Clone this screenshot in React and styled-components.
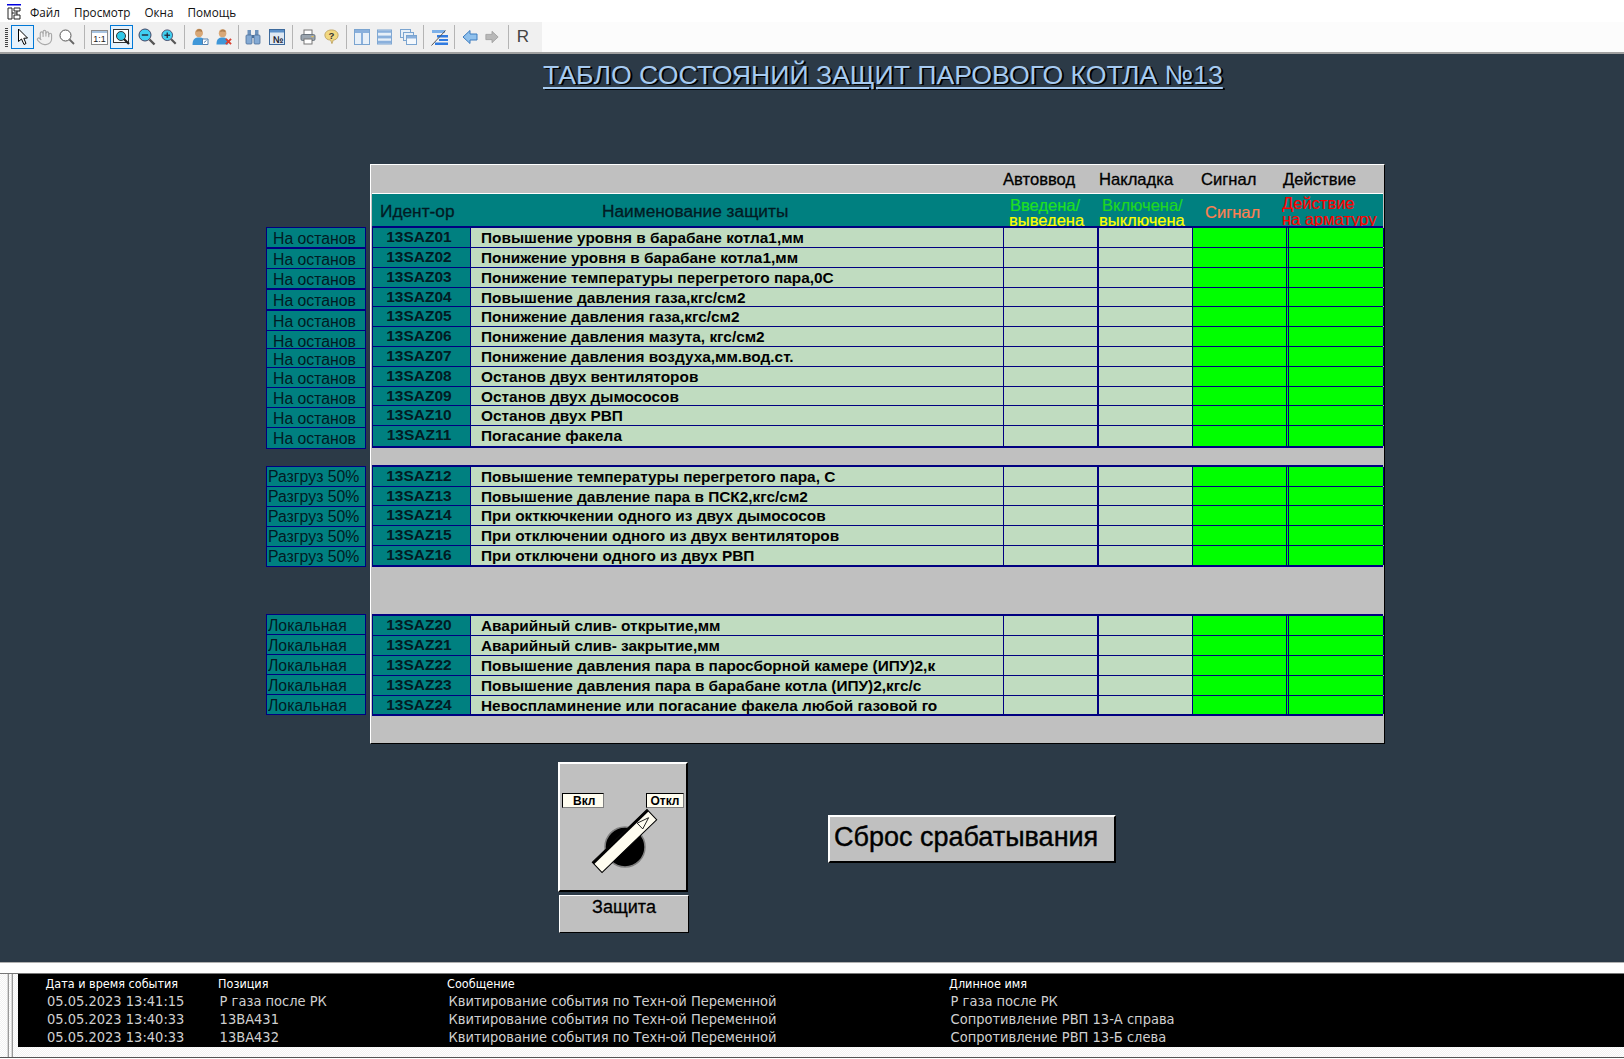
import React from 'react';
import styled, { createGlobalStyle } from 'styled-components';
import { Hand } from 'lucide-react';

const GlobalStyle = createGlobalStyle`
	html, body {
		margin: 0;
		padding: 0;
		background: #fff;
	}
	* {
		box-sizing: border-box;
	}
`;

const NAVY = '#000080';
const TEAL = '#008080';
const DARK = '#2c3a47';

const Window = styled.div`
	width: 1624px;
	height: 1059px;
	display: flex;
	flex-direction: column;
	overflow: hidden;
	font-family: "Liberation Sans", Arial, sans-serif;
`;

const MenuBar = styled.div`
	height: 22px;
	flex: none;
	display: flex;
	align-items: center;
	padding: 1px 0 0 7px;
	background: #fff;
	font-family: "Open Sans", "Noto Sans", sans-serif;
	font-size: 11.7px;
	color: #111;
`;

const MenuItem = styled.span`
	margin-left: ${props => props.gap}px;
`;

const ToolBar = styled.div`
	height: 32px;
	flex: none;
	background: #fcfcfc;
	border-bottom: 2px solid #a0a0a0;
`;

const ToolStrip = styled.div`
	width: 542px;
	height: 30px;
	background: #f0f0f0;
	display: flex;
	align-items: center;
	padding-left: 5px;
`;

const Grip = styled.div`
	width: 3px;
	height: 19px;
	margin-right: 3px;
	background: repeating-linear-gradient(#444 0 1px, transparent 1px 2px);
`;

const ToolSlot = styled.div`
	width: ${props => props.w || 22}px;
	height: 24px;
	flex: none;
	display: flex;
	align-items: center;
	justify-content: center;
	border: 1px solid ${props => props.active ? '#0078d7' : 'transparent'};
	background: ${props => props.hot ? '#e5f1fb' : 'transparent'};
	font-size: 17px;
	color: #444;
`;

const ToolSep = styled.div`
	width: 1px;
	height: 24px;
	flex: none;
	margin: 0 ${props => props.r ?? 0}px 0 ${props => props.l ?? 0}px;
	background: #b4b4b4;
`;

const Screen = styled.div`
	flex: 1;
	background: ${DARK};
	min-height: 0;
`;

const Title = styled.div`
	height: 110px;
	padding: 6px 0 0 543px;
	font-size: 26.6px;
	line-height: 30px;
	color: #a6caf0;
	text-decoration: underline;
	text-decoration-thickness: 2px;
	text-underline-offset: 3px;
	text-shadow: 2px 1px 0 #000;
	white-space: nowrap;
`;

const Board = styled.div`
	display: flex;
	gap: 4px;
	padding-left: 266px;
`;

const SideColumn = styled.div`
	width: 100px;
	padding-top: 63px;
	display: flex;
	flex-direction: column;
`;

const SideGroup = styled.div`
	display: flex;
	flex-direction: column;
	margin-top: ${props => props.gap}px;
`;

const SideLabel = styled.div`
	height: ${props => props.h}px;
	margin-top: ${props => props.joined ? -1 : 0}px;
	border: 1px solid ${NAVY};
	background: ${TEAL};
	padding-left: ${props => props.pad}px;
	font-size: 15.8px;
	color: #021b24;
	overflow: hidden;
`;

const SideText = styled.div`
	height: ${props => props.clip ? 17 : 19}px;
	line-height: ${props => props.clip ? 22 : 21}px;
	margin-top: ${props => props.up ? -1 : 0}px;
	overflow: hidden;
	white-space: nowrap;
`;

const Panel = styled.div`
	width: 1015px;
	height: 580px;
	padding: 0 1px 0 1px;
	background: #c0c0c0;
	border: 1px solid;
	border-color: #fff #000 #000 #fff;
`;

const TopHead = styled.div`
	height: 28px;
	display: grid;
	grid-template-columns: 631px 96px 102px 82px 1fr;
	align-items: center;
	font-size: 16.6px;
	color: #000;
	-webkit-text-stroke: 0.3px #000;
	padding-top: 2px;
	white-space: nowrap;
`;

const TableHead = styled.div`
	height: 33px;
	display: grid;
	grid-template-columns: 98px 534px 95px 93px 96px 96px;
	background: ${TEAL};
	border-top: 1px solid #fff;
	font-size: 17.3px;
	color: #021b24;
`;

const HeadText = styled.div`
	padding: 7px 0 0 ${props => props.pad}px;
	-webkit-text-stroke: 0.3px #021b24;
	white-space: nowrap;
`;

const TwoLine = styled.div`
	padding-top: ${props => props.top ?? 3}px;
	margin-left: ${props => props.pad}px;
	font-size: 16.5px;
	line-height: 15px;
	height: 32px;
	overflow: hidden;
	white-space: nowrap;
`;

const Line = styled.div`
	color: ${props => props.color};
	padding-left: ${props => props.pad || 0}px;
	margin-top: ${props => props.mt || 0}px;
	-webkit-text-stroke: 0.2px ${props => props.color};
`;

const Group = styled.div`
	border-top: 2px solid ${NAVY};
	margin-top: ${props => props.gap}px;
`;

const Row = styled.div`
	height: ${props => props.h}px;
	display: grid;
	grid-template-columns: 99px 533px 95px 93px 96px 96px;
	background: #c0dcc0;
	border-bottom: ${props => props.last ? 2 : 1}px solid ${NAVY};
`;

const IdCell = styled.div`
	background: ${TEAL};
	border-left: 1px solid ${NAVY};
	border-right: 1px solid ${NAVY};
	text-align: center;
	font-size: 15.5px;
	font-weight: bold;
	line-height: 17px;
	color: #021b24;
	padding-right: 5px;
	white-space: nowrap;
`;

const NameCell = styled.div`
	padding: 1px 0 0 10px;
	font-size: 15.4px;
	font-weight: bold;
	line-height: 17px;
	color: #000;
	white-space: nowrap;
	overflow: hidden;
	border-right: 1px solid ${NAVY};
`;

const StateCell = styled.div`
	border-right: ${props => props.thick ? 2 : 0}px solid ${NAVY};
`;

const SignalCell = styled.div`
	background: #00ff00;
	border-left: 1px solid ${NAVY};
`;

const ActionCell = styled.div`
	background: #00ff00;
	background-clip: padding-box;
	border-left: 3px double ${NAVY};
	border-right: 1px solid ${NAVY};
	margin-left: -2px;
`;

const Controls = styled.div`
	display: flex;
	padding: 18px 0 0 558px;
`;

const SwitchColumn = styled.div`
	width: 130px;
	display: flex;
	flex-direction: column;
	gap: 3px;
`;

const SwitchBox = styled.div`
	width: 130px;
	height: 130px;
	background: #c0c0c0;
	border: 2px solid;
	border-color: #fff #000 #000 #fff;
	padding-top: 29px;
`;

const SwitchTags = styled.div`
	display: flex;
	justify-content: space-between;
	padding: 0 2px;
`;

const Tag = styled.div`
	width: ${props => props.w}px;
	height: 15px;
	background: #fffdf0;
	border: 1px solid;
	border-color: #000 #808080 #808080 #000;
	font-size: 12px;
	font-weight: bold;
	line-height: 14px;
	text-align: ${props => props.pad ? 'left' : 'center'};
	padding-left: ${props => props.pad || 0}px;
	color: #000;
`;

const KnobWrap = styled.div`
	height: 72px;
	padding-left: 34px;
`;

const SwitchCaption = styled.div`
	width: 130px;
	height: 38px;
	margin-left: 1px;
	background: #c0c0c0;
	border: 1px solid;
	border-color: #fff #000 #000 #fff;
	text-align: center;
	font-size: 18px;
	line-height: 23px;
	color: #000;
	-webkit-text-stroke: 0.3px #000;
`;

const ResetButton = styled.div`
	width: 288px;
	height: 48px;
	margin: 53px 0 0 140px;
	background: #c0c0c0;
	border: 2px solid;
	border-color: #fff #000 #000 #fff;
	padding-left: 4px;
	font-size: 27px;
	line-height: 40px;
	color: #000;
	white-space: nowrap;
	-webkit-text-stroke: 0.4px #000;
`;

const EventPanel = styled.div`
	height: 97px;
	flex: none;
	background: #fff;
	padding-top: 10px;
	border-top: 1px solid #b0b0b0;
`;

const EventFrame = styled.div`
	height: 85px;
	display: flex;
	background: repeating-conic-gradient(#f2f2f2 0 25%, #fff 0 50%) 0 0 / 2px 2px;
	border-top: 1px solid #777;
	border-bottom: 1px solid #555;
`;

const EventGrip = styled.div`
	width: 18px;
	flex: none;
	padding-left: 7px;
	display: flex;
	gap: 2px;
	span {
		width: 2px;
		background: #d8d8d8;
		border-right: 1px solid #999;
	}
`;

const EventList = styled.div`
	flex: 1;
	height: 73px;
	background: #000;
	padding-top: 1px;
	font-family: "DejaVu Sans Condensed", "DejaVu Sans", sans-serif;
	font-stretch: condensed;
`;

const EventRow = styled.div`
	display: grid;
	grid-template-columns: 172.6px 229px 502px 1fr;
	padding-left: ${props => props.head ? 27.5 : 29}px;
	height: ${props => props.head ? 17 : 18}px;
	font-size: ${props => props.head ? 12.5 : 14.5}px;
	line-height: 18px;
	color: ${props => props.head ? '#fff' : '#d0d0d0'};
	white-space: nowrap;
`;

const ArrowIcon = () => (
	<svg width="12" height="18" viewBox="0 0 12 18">
		<path d="M1.5 1 L1.5 13.5 L4.5 11 L7 16.5 L9 15.5 L6.8 10.3 L10.5 10 Z" fill="#fff" stroke="#000" strokeWidth="1"/>
	</svg>
);

const LensIcon = () => (
	<svg width="18" height="18" viewBox="0 0 18 18">
		<circle cx="7.5" cy="7.5" r="5.5" fill="#fff" stroke="#555" strokeWidth="1"/>
		<path d="M11.5 11.5 L16 16" stroke="#666" strokeWidth="1.8"/>
	</svg>
);

const OneToOneIcon = () => (
	<svg width="17" height="15" viewBox="0 0 17 15">
		<rect x="0.5" y="0.5" width="16" height="14" fill="#fff" stroke="#8a8a8a"/>
		<rect x="1" y="1" width="15" height="2" fill="#a8c4e0"/>
		<text x="8.5" y="12" textAnchor="middle" fontSize="9" fontFamily="Liberation Sans" fill="#222">1:1</text>
	</svg>
);

const FitIcon = () => (
	<svg width="18" height="18" viewBox="0 0 18 18">
		<rect x="0.5" y="1.5" width="15" height="13" fill="#fff" stroke="#333"/>
		<circle cx="8" cy="8" r="4.5" fill="#30c8e8" stroke="#333"/>
		<path d="M11 11 L16 16" stroke="#222" strokeWidth="2.2"/>
	</svg>
);

const ZoomIcon = ({plus}) => (
	<svg width="18" height="18" viewBox="0 0 18 18">
		<circle cx="7" cy="7" r="6" fill="#40d0f0" stroke="#446"/>
		<path d="M3.8 7 H10.2" stroke="#223" strokeWidth="1.4"/>
		{plus && <path d="M7 3.8 V10.2" stroke="#223" strokeWidth="1.4"/>}
		<path d="M11.5 11.5 L16.5 16.5" stroke="#555" strokeWidth="2.4"/>
	</svg>
);

const UserIcon = ({cross}) => (
	<svg width="17" height="18" viewBox="0 0 17 18">
		<ellipse cx="7" cy="5" rx="4" ry="4.3" fill="#d8a878"/>
		<path d="M5 2 Q7 0 10 2 L10 4 Q7 2.5 4 4 Z" fill="#b08050"/>
		<path d="M0.5 17 C0.5 11 3 9.5 7 9.5 C11 9.5 13 11 13 17 Z" fill="#3f97d8"/>
		{cross
			? <path d="M10.5 11 L16 16.5 M16 11 L10.5 16.5" stroke="#d84030" strokeWidth="2"/>
			: <path d="M10.5 11 H16 V16.5 H10.5 Z M12 14.5 L14.5 12.5" fill="#fff" stroke="#5080b0"/>}
	</svg>
);

const BinocularsIcon = () => (
	<svg width="16" height="16" viewBox="0 0 16 16">
		<rect x="2.5" y="1" width="3.5" height="5" fill="#6d92bc"/>
		<rect x="10" y="1" width="3.5" height="5" fill="#6d92bc"/>
		<rect x="1" y="6" width="6" height="9" rx="1" fill="#84aad4" stroke="#4c709a" strokeWidth="0.8"/>
		<rect x="9" y="6" width="6" height="9" rx="1" fill="#84aad4" stroke="#4c709a" strokeWidth="0.8"/>
		<rect x="7" y="6" width="2" height="3" fill="#4c709a"/>
	</svg>
);

const NumberIcon = () => (
	<svg width="17" height="16" viewBox="0 0 17 16">
		<rect x="0.5" y="0.5" width="15" height="15" fill="#dfe8f2" stroke="#3d6a9c"/>
		<rect x="1" y="1" width="14" height="2.5" fill="#5b8fc8"/>
		<text x="9" y="13.5" textAnchor="middle" fontSize="9.5" fontWeight="bold" fontFamily="Liberation Sans" fill="#223">№</text>
	</svg>
);

const PrinterIcon = () => (
	<svg width="16" height="16" viewBox="0 0 16 16">
		<rect x="4" y="1" width="8" height="5" fill="#fff" stroke="#777"/>
		<rect x="1" y="5.5" width="14" height="6" rx="1.5" fill="#9aa4ae" stroke="#6a747e"/>
		<rect x="4" y="10" width="8" height="5" fill="#fff" stroke="#777"/>
		<rect x="11.5" y="7" width="2" height="1.2" fill="#e8c050"/>
	</svg>
);

const HelpIcon = () => (
	<svg width="17" height="18" viewBox="0 0 17 18">
		<path d="M8.5 1 C13 1 16 3.5 16 7 C16 10.5 13 12.5 10.5 12.5 L9 16.5 L7.5 12.5 C4 12.5 1 10.5 1 7 C1 3.5 4 1 8.5 1 Z" fill="#f2d880" stroke="#bda260"/>
		<text x="8.5" y="11" textAnchor="middle" fontSize="11" fontWeight="bold" fontFamily="Liberation Sans" fill="#333">?</text>
	</svg>
);

const SplitVIcon = () => (
	<svg width="16" height="16" viewBox="0 0 16 16">
		<rect x="0.5" y="0.5" width="15" height="15" fill="#e8f0f8" stroke="#7aa4d0"/>
		<rect x="1" y="1" width="14" height="3" fill="#8ab0dc"/>
		<rect x="7" y="1" width="2" height="14" fill="#8ab0dc"/>
	</svg>
);

const SplitHIcon = () => (
	<svg width="16" height="16" viewBox="0 0 16 16">
		<rect x="0.5" y="0.5" width="15" height="15" fill="#e8f0f8" stroke="#7aa4d0"/>
		<rect x="1" y="1" width="14" height="2.5" fill="#8ab0dc"/>
		<rect x="1" y="6.5" width="14" height="3" fill="#8ab0dc"/>
		<rect x="1" y="12" width="14" height="3" fill="#8ab0dc"/>
	</svg>
);

const CascadeIcon = () => (
	<svg width="17" height="16" viewBox="0 0 17 16">
		<rect x="0.5" y="0.5" width="10" height="8" fill="#e8f0f8" stroke="#7aa4d0"/>
		<rect x="3.5" y="3.5" width="10" height="8" fill="#e8f0f8" stroke="#7aa4d0"/>
		<rect x="6.5" y="6.5" width="10" height="9" fill="#f4f8fc" stroke="#7aa4d0"/>
		<rect x="7" y="7" width="9" height="2.5" fill="#8ab0dc"/>
	</svg>
);

const ChartIcon = () => (
	<svg width="17" height="17" viewBox="0 0 17 17">
		<rect x="1" y="1" width="13" height="3" fill="#7db0e8"/>
		<rect x="6" y="6" width="11" height="2.5" fill="#2f7ae0"/>
		<rect x="8" y="10" width="9" height="2" fill="#2f7ae0"/>
		<rect x="4" y="13.5" width="13" height="2.5" fill="#2f7ae0"/>
		<path d="M0.5 16.5 L14.5 1.5" stroke="#555" strokeWidth="1"/>
	</svg>
);

const NavIcon = ({back}) => (
	<svg width="16" height="16" viewBox="0 0 16 16">
		{back
			? <path d="M1 8 L8 1.5 V5 H15 V11 H8 V14.5 Z" fill="#8fc0ec" stroke="#3d7cc0"/>
			: <path d="M15 8 L8 1.5 V5 H1 V11 H8 V14.5 Z" fill="#b8b8b8" stroke="#a0a0a0"/>}
	</svg>
);

const KnobIcon = () => (
	<svg width="62" height="72" viewBox="0 0 62 72" style={{overflow: 'visible'}}>
		<circle cx="31" cy="39" r="20" fill="#000" stroke="#808080" strokeWidth="1.5"/>
		<g transform="rotate(-44 30.5 33)">
			<rect x="-7.5" y="26" width="76" height="14" fill="#fffdf0" stroke="#000" strokeWidth="1"/>
			<rect x="-7.5" y="26" width="76" height="2.5" fill="#000"/>
			<path d="M52 37 L64 33 L52 29 Z" fill="none" stroke="#000" strokeWidth="0.8"/>
		</g>
	</svg>
);

const firstRows = [
	['13SAZ01', 'Повышение уровня в барабане котла1,мм', 20],
	['13SAZ02', 'Понижение уровня в барабане котла1,мм', 20],
	['13SAZ03', 'Понижение температуры перегретого пара,0С', 20],
	['13SAZ04', 'Повышение давления газа,кгс/см2', 19],
	['13SAZ05', 'Понижение давления газа,кгс/см2', 20],
	['13SAZ06', 'Понижение давления мазута, кгс/см2', 20],
	['13SAZ07', 'Понижение давления воздуха,мм.вод.ст.', 20],
	['13SAZ08', 'Останов двух вентиляторов', 20],
	['13SAZ09', 'Останов двух дымососов', 19],
	['13SAZ10', 'Останов двух РВП', 20],
	['13SAZ11', 'Погасание факела', 22],
];

const secondRows = [
	['13SAZ12', 'Повышение температуры перегретого пара, С', 20],
	['13SAZ13', 'Повышение давление пара в ПСК2,кгс/см2', 19],
	['13SAZ14', 'При окткючкении одного из двух дымососов', 20],
	['13SAZ15', 'При отключении одного из двух вентиляторов', 20],
	['13SAZ16', 'При отключени одного из двух РВП', 21],
];

const thirdRows = [
	['13SAZ20', 'Аварийный слив- открытие,мм', 20],
	['13SAZ21', 'Аварийный слив- закрытие,мм', 20],
	['13SAZ22', 'Повышение давления пара в паросборной камере (ИПУ)2,к', 20],
	['13SAZ23', 'Повышение давления пара в барабане котла (ИПУ)2,кгс/с', 20],
	['13SAZ24', 'Невоспламинение или погасание факела любой газовой го', 20],
];

const sideFirst = [
	[21, false, false], [21, false, false], [21, true, true], [21, false, true], [21, false, false], [19, true, false],
	[20, true, true], [21, true, false], [21, true, false], [21, true, true], [22, true, false],
];
const sideRest = [[21, false, false], [21, true, false], [21, true, false], [21, true, false], [21, true, false]];

const events = [
	['05.05.2023 13:41:15', 'Р газа после РК', 'Квитирование события по Техн-ой Переменной', 'Р газа после РК'],
	['05.05.2023 13:40:33', '13BA431', 'Квитирование события по Техн-ой Переменной', 'Сопротивление РВП 13-А справа'],
	['05.05.2023 13:40:33', '13BA432', 'Квитирование события по Техн-ой Переменной', 'Сопротивление РВП 13-Б слева'],
];

const TableGroup = ({rows, gap}) => (
	<Group gap={gap}>
		{rows.map(([id, name, h], i) => (
			<Row key={id} h={h} last={i === rows.length - 1}>
				<IdCell>{id}</IdCell>
				<NameCell>{name}</NameCell>
				<StateCell thick/>
				<StateCell/>
				<SignalCell/>
				<ActionCell/>
			</Row>
		))}
	</Group>
);

const SideList = ({items, text, pad, gap, up}) => (
	<SideGroup gap={gap}>
		{items.map(([h, joined, clip], i) => (
			<SideLabel key={i} h={h} joined={joined} pad={pad}>
				<SideText clip={clip} up={up}>{text}</SideText>
			</SideLabel>
		))}
	</SideGroup>
);

function App() {
	return (
		<Window>
			<GlobalStyle/>
			<MenuBar>
				<svg width="14" height="16" viewBox="0 0 14 16">
					<rect x="0" y="0" width="14" height="1.5" fill="#0000e0"/>
					<path d="M1 4 H5 V15 H1 Z M7 4 H13 V7 H7 Z M7 11 H13 V15 H7 Z" fill="none" stroke="#222"/>
					<path d="M5 9 H10 M10 7 V11" stroke="#222"/>
				</svg>
				<MenuItem gap={9}>Файл</MenuItem>
				<MenuItem gap={14}>Просмотр</MenuItem>
				<MenuItem gap={14}>Окна</MenuItem>
				<MenuItem gap={14}>Помощь</MenuItem>
			</MenuBar>
			<ToolBar>
				<ToolStrip>
					<Grip/>
					<ToolSlot active hot w={23}><ArrowIcon/></ToolSlot>
					<ToolSlot w={21}><Hand size={17} color="#a8a8a8" strokeWidth={1.6}/></ToolSlot>
					<ToolSlot w={23}><LensIcon/></ToolSlot>
					<ToolSep l={6} r={4}/>
					<ToolSlot w={21}><OneToOneIcon/></ToolSlot>
					<ToolSlot active hot w={23}><FitIcon/></ToolSlot>
					<ToolSlot w={27}><ZoomIcon/></ToolSlot>
					<ToolSlot w={18}><ZoomIcon plus/></ToolSlot>
					<ToolSep l={6}/>
					<ToolSlot w={30}><UserIcon/></ToolSlot>
					<ToolSlot w={18}><UserIcon cross/></ToolSlot>
					<ToolSep l={5}/>
					<ToolSlot w={28}><BinocularsIcon/></ToolSlot>
					<ToolSlot w={21}><NumberIcon/></ToolSlot>
					<ToolSep l={4}/>
					<ToolSlot w={30}><PrinterIcon/></ToolSlot>
					<ToolSlot w={17}><HelpIcon/></ToolSlot>
					<ToolSep l={6}/>
					<ToolSlot w={29}><SplitVIcon/></ToolSlot>
					<ToolSlot w={17}><SplitHIcon/></ToolSlot>
					<ToolSlot w={30}><CascadeIcon/></ToolSlot>
					<ToolSep/>
					<ToolSlot w={30}><ChartIcon/></ToolSlot>
					<ToolSep/>
					<ToolSlot w={29}><NavIcon back/></ToolSlot>
					<ToolSlot w={16}><NavIcon/></ToolSlot>
					<ToolSep l={8}/>
					<ToolSlot w={28}>R</ToolSlot>
				</ToolStrip>
			</ToolBar>
			<Screen>
				<Title>ТАБЛО СОСТОЯНИЙ ЗАЩИТ ПАРОВОГО КОТЛА №13</Title>
				<Board>
					<SideColumn>
						<SideList items={sideFirst} text="На останов" pad={6} gap={0}/>
						<SideList items={sideRest} text="Разгруз 50%" pad={1} gap={17} up/>
						<SideList items={sideRest} text="Локальная" pad={1} gap={47}/>
					</SideColumn>
					<Panel>
						<TopHead>
							<span/>
							<span>Автоввод</span>
							<span>Накладка</span>
							<span>Сигнал</span>
							<span>Действие</span>
						</TopHead>
						<TableHead>
							<HeadText pad={8}>Идент-ор</HeadText>
							<HeadText pad={132}>Наименование защиты</HeadText>
							<TwoLine pad={5} top={4}>
								<Line color="#1fe01f" pad={1}>Введена/</Line>
								<Line color="#ffff00">выведена</Line>
							</TwoLine>
							<TwoLine pad={0} top={4}>
								<Line color="#1fd81f" pad={3}>Включена/</Line>
								<Line color="#ffff00">выключена</Line>
							</TwoLine>
							<TwoLine pad={13} top={11}>
								<Line color="#ff7f50">Сигнал</Line>
							</TwoLine>
							<TwoLine pad={-6} top={2}>
								<Line color="#ff0000">Действие</Line>
								<Line color="#ff0000" mt={1}>на арматуру</Line>
							</TwoLine>
						</TableHead>
						<TableGroup rows={firstRows} gap={0}/>
						<TableGroup rows={secondRows} gap={17}/>
						<TableGroup rows={thirdRows} gap={47}/>
					</Panel>
				</Board>
				<Controls>
					<SwitchColumn>
						<SwitchBox>
							<SwitchTags>
								<Tag w={42} pad={10}>Вкл</Tag>
								<Tag w={38}>Откл</Tag>
							</SwitchTags>
							<KnobWrap><KnobIcon/></KnobWrap>
						</SwitchBox>
						<SwitchCaption>Защита</SwitchCaption>
					</SwitchColumn>
					<ResetButton>Сброс срабатывания</ResetButton>
				</Controls>
			</Screen>
			<EventPanel>
				<EventFrame>
					<EventGrip><span/><span/></EventGrip>
					<EventList>
						<EventRow head>
							<span>Дата и время события</span>
							<span>Позиция</span>
							<span>Сообщение</span>
							<span>Длинное имя</span>
						</EventRow>
						{events.map(row => (
							<EventRow key={row[0] + row[1]}>
								{row.map(text => <span key={text}>{text}</span>)}
							</EventRow>
						))}
					</EventList>
				</EventFrame>
			</EventPanel>
		</Window>
	);
}

export default App;
